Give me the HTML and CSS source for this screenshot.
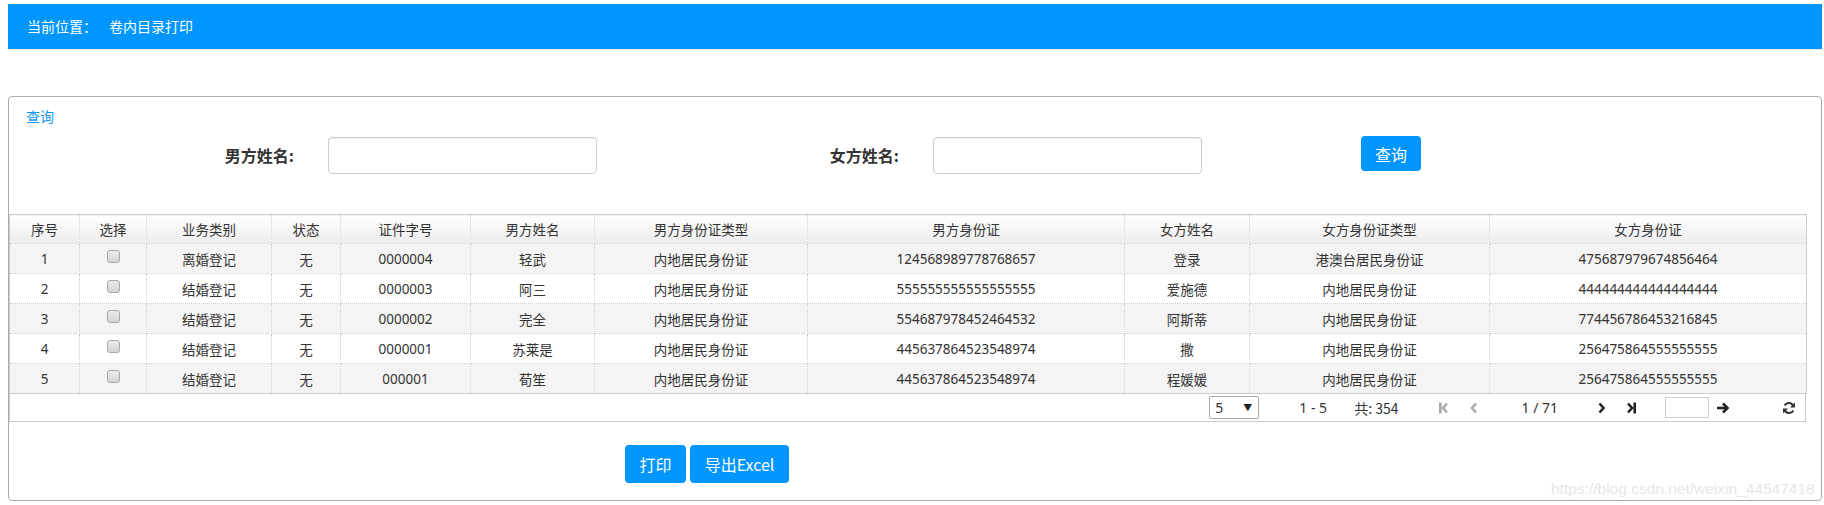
FILE: index.html
```html
<!DOCTYPE html>
<html lang="zh-CN">
<head>
<meta charset="utf-8">
<title>卷内目录打印</title>
<link rel="stylesheet" href="styles.css">
</head>
<body>
<div class="topbar">当前位置：<span class="crumb">卷内目录打印</span></div>

<div class="panel">
  <div class="panel-title">查询</div>
  <div class="search-row">
    <label class="lbl lbl-1">男方姓名:</label>
    <input class="txt" type="text">
    <label class="lbl lbl-2">女方姓名:</label>
    <input class="txt" type="text">
    <button class="btn btn-search">查询</button>
  </div>

  <div class="grid">
    <table>
      <colgroup>
        <col class="c1"><col class="c2"><col class="c3"><col class="c4"><col class="c5"><col class="c6">
        <col class="c7"><col class="c8"><col class="c9"><col class="c10"><col class="c11">
      </colgroup>
      <thead>
        <tr><th>序号</th><th>选择</th><th>业务类别</th><th>状态</th><th>证件字号</th><th>男方姓名</th><th>男方身份证类型</th><th>男方身份证</th><th>女方姓名</th><th>女方身份证类型</th><th>女方身份证</th></tr>
      </thead>
      <tbody>
        <tr class="odd"><td>1</td><td><span class="cb"></span></td><td>离婚登记</td><td>无</td><td>0000004</td><td>轻武</td><td>内地居民身份证</td><td>124568989778768657</td><td>登录</td><td>港澳台居民身份证</td><td>475687979674856464</td></tr>
        <tr><td>2</td><td><span class="cb"></span></td><td>结婚登记</td><td>无</td><td>0000003</td><td>阿三</td><td>内地居民身份证</td><td>555555555555555555</td><td>爱施德</td><td>内地居民身份证</td><td>444444444444444444</td></tr>
        <tr class="odd"><td>3</td><td><span class="cb"></span></td><td>结婚登记</td><td>无</td><td>0000002</td><td>完全</td><td>内地居民身份证</td><td>554687978452464532</td><td>阿斯蒂</td><td>内地居民身份证</td><td>774456786453216845</td></tr>
        <tr><td>4</td><td><span class="cb"></span></td><td>结婚登记</td><td>无</td><td>0000001</td><td>苏莱是</td><td>内地居民身份证</td><td>445637864523548974</td><td>撒</td><td>内地居民身份证</td><td>256475864555555555</td></tr>
        <tr class="odd"><td>5</td><td><span class="cb"></span></td><td>结婚登记</td><td>无</td><td>000001</td><td>荀笙</td><td>内地居民身份证</td><td>445637864523548974</td><td>程媛媛</td><td>内地居民身份证</td><td>256475864555555555</td></tr>
      </tbody>
    </table>
    <div class="pager">
      <div class="pg-select"><span>5</span><span class="caret">▼</span></div>
      <span class="pg-range">1 - 5</span>
      <span class="pg-total">共: 354</span>
      <span class="pg-icon pg-first dis"><svg width="9" height="12" viewBox="0 0 9 12"><rect x="0" y="0.5" width="2.6" height="11" fill="currentColor"/><path d="M8 1.5 L4 6 L8 10.5" fill="none" stroke="currentColor" stroke-width="2.6"/></svg></span>
      <span class="pg-icon pg-prev dis"><svg width="7" height="12" viewBox="0 0 7 12"><path d="M6 1.5 L2 6 L6 10.5" fill="none" stroke="currentColor" stroke-width="2.6"/></svg></span>
      <span class="pg-page">1 / 71</span>
      <span class="pg-icon pg-next"><svg width="8" height="12" viewBox="0 0 8 12"><path d="M1.5 1.5 L5.5 6 L1.5 10.5" fill="none" stroke="currentColor" stroke-width="2.6"/></svg></span>
      <span class="pg-icon pg-last"><svg width="9" height="12" viewBox="0 0 9 12"><path d="M1 1.5 L5 6 L1 10.5" fill="none" stroke="currentColor" stroke-width="2.6"/><rect x="6.4" y="0.5" width="2.6" height="11" fill="currentColor"/></svg></span>
      <input class="pg-input" type="text">
      <span class="pg-icon pg-go"><svg width="14" height="12" viewBox="0 0 14 12"><path d="M1 6 H11" stroke="currentColor" stroke-width="2.6"/><path d="M7 1.5 L11.5 6 L7 10.5" fill="none" stroke="currentColor" stroke-width="2.6"/></svg></span>
      <span class="pg-icon pg-refresh"><svg width="14" height="14" viewBox="0 0 14 14"><path d="M11.3 5.2 A4.8 4.8 0 0 0 2.6 4.4" fill="none" stroke="currentColor" stroke-width="2"/><path d="M2.7 8.8 A4.8 4.8 0 0 0 11.4 9.6" fill="none" stroke="currentColor" stroke-width="2"/><polygon points="13,1.5 13,6.5 8,6.5" fill="currentColor"/><polygon points="1,12.5 1,7.5 6,7.5" fill="currentColor"/></svg></span>
    </div>
  </div>

  <div class="actions">
    <button class="btn btn-print">打印</button>
    <button class="btn btn-export">导出Excel</button>
  </div>
</div>

<div class="watermark">https://blog.csdn.net/weixin_44547418</div>
</body>
</html>
```

FILE: styles.css
```css
html, body {
  background: #fff;
}
body {
  margin: 4px 2px 0 8px;
  font-family: "Noto Sans", "Noto Sans CJK SC", sans-serif;
  color: #333;
  font-size: 14px;
  position: relative;
  height: 501px;
  overflow: hidden;
}

.topbar {
  height: 45px;
  line-height: 45px;
  background: #0096ff;
  color: #fff;
  font-size: 14px;
  padding-left: 19px;
  box-shadow: 0 0 2px rgba(0, 0, 0, 0.25);
  font-family: "Noto Sans CJK SC", sans-serif;
}
.crumb {
  margin-left: 12px;
}

.panel {
  margin-top: 47px;
  border: 1px solid #aaa;
  border-radius: 4px;
  padding: 9px 0 17px 0;
}

.panel-title {
  padding-left: 17px;
  line-height: 20px;
  height: 20px;
  color: #0d96f5;
  font-size: 14px;
  font-family: "Noto Sans CJK SC", sans-serif;
}

.search-row {
  margin-top: 11px;
  display: flex;
  align-items: flex-start;
  height: 37px;
}
.lbl {
  box-sizing: border-box;
  text-align: right;
  font-weight: bold;
  font-size: 16px;
  line-height: 37px;
  color: #333;
  font-family: "Noto Sans CJK SC", sans-serif;
}
.lbl-1 { width: 285px; }
.lbl-2 { width: 302px; }
.txt {
  box-sizing: border-box;
  width: 269px;
  height: 37px;
  margin: 0 0 0 34px;
  border: 1px solid #ccc;
  border-radius: 4px;
  box-shadow: inset 0 1px 1px rgba(0, 0, 0, 0.075);
  outline: none;
  padding: 0 8px;
}

.btn {
  border: 0;
  border-radius: 4px;
  background: #0096ff;
  color: #fff;
  font-size: 16px;
  font-family: "Noto Sans CJK SC", sans-serif;
  padding: 0;
  cursor: pointer;
}
.btn-search {
  margin-left: 159px;
  margin-top: -1px;
  width: 60px;
  height: 35px;
}

.grid {
  margin-top: 40px;
  width: 1797px;
}
table {
  width: 1797px;
  table-layout: fixed;
  border-collapse: collapse;
  border: 1px solid #ccc;
  font-size: 13.5px;
}
.c1 { width: 70px; }
.c2 { width: 67px; }
.c3 { width: 125px; }
.c4 { width: 69px; }
.c5 { width: 130px; }
.c6 { width: 124px; }
.c7 { width: 213px; }
.c8 { width: 317px; }
.c9 { width: 125px; }
.c10 { width: 240px; }
.c11 { width: 317px; }

th, td {
  padding: 0;
  text-align: center;
  border: 1px dotted #ccc;
  white-space: nowrap;
  overflow: hidden;
}
th {
  height: 28px;
  font-weight: normal;
  background: linear-gradient(#ffffff, #ececec);
  color: #333;
}
td {
  height: 29px;
}
tr.odd td {
  background: #f4f4f4;
}
.cb {
  display: inline-block;
  width: 11px;
  height: 11px;
  border: 1px solid #a9a9a9;
  border-radius: 3px;
  background: linear-gradient(#ececec, #d4d4d4);
  vertical-align: middle;
  position: relative;
  top: -3px;
}

.pager {
  box-sizing: border-box;
  height: 28px;
  border: 1px solid #ccc;
  border-top: 0;
  display: flex;
  align-items: center;
  justify-content: flex-end;
  padding-right: 9px;
  font-size: 14px;
  color: #333;
}
.pg-select {
  box-sizing: border-box;
  width: 50px;
  height: 23px;
  border: 1px solid #aaa;
  border-radius: 2px;
  display: flex;
  align-items: center;
  justify-content: space-between;
  padding: 0 6px 0 5px;
  font-size: 14px;
}
.caret {
  font-size: 9px;
  color: #222;
}
.pg-range { margin-left: 40px; }
.pg-total { margin-left: 27px; font-family: "Noto Sans CJK SC", sans-serif; }
.pg-icon {
  display: inline-flex;
  align-items: center;
  color: #222;
}
.pg-icon.dis { color: #aaa; }
.pg-first { margin-left: 41px; }
.pg-prev { margin-left: 22px; }
.pg-page { margin-left: 44px; }
.pg-next { margin-left: 40px; }
.pg-last { margin-left: 21px; }
.pg-input {
  box-sizing: border-box;
  margin-left: 29px;
  width: 44px;
  height: 21px;
  border: 1px solid #ccc;
  padding: 0;
  outline: none;
}
.pg-go { margin-left: 7px; }
.pg-refresh { margin-left: 52px; color: #333; }

.actions {
  margin-top: 23px;
  padding-left: 616px;
  display: flex;
  gap: 4px;
}
.btn-print {
  width: 61px;
  height: 38px;
}
.btn-export {
  width: 99px;
  height: 38px;
}

.watermark {
  position: absolute;
  left: 1543px;
  top: 476px;
  font-family: "Liberation Sans", sans-serif;
  font-size: 15.5px;
  color: #e6e6e6;
  white-space: nowrap;
}
```
